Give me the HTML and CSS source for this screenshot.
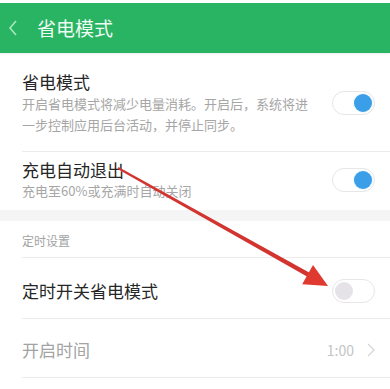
FILE: index.html
```html
<!DOCTYPE html>
<html lang="zh-CN">
<head>
<meta charset="utf-8">
<link rel="stylesheet" href="styles.css">
</head>
<body>
<div class="page">
  <header class="appbar">
    <svg class="back" width="10" height="16" viewBox="0 0 10 16"><path d="M8 1 L2 8 L8 15" fill="none" stroke="#a8e6bf" stroke-width="1.6"/></svg>
    <span class="appbar-title">省电模式</span>
  </header>

  <div class="row row-main">
    <div class="text">
      <div class="title">省电模式</div>
      <div class="desc desc-wide">开启省电模式将减少电量消耗。开启后，系统将进一步控制应用后台活动，并停止同步。</div>
    </div>
    <span class="toggle on"><span class="knob"></span></span>
  </div>

  <div class="row row-charge">
    <div class="text">
      <div class="title">充电自动退出</div>
      <div class="desc">充电至60%或充满时自动关闭</div>
    </div>
    <span class="toggle on"><span class="knob"></span></span>
  </div>

  <div class="band"></div>

  <div class="section-head">定时设置</div>

  <div class="row row-single">
    <div class="title">定时开关省电模式</div>
    <span class="toggle off"><span class="knob"></span></span>
  </div>

  <div class="row row-single row-disabled">
    <div class="title">开启时间</div>
    <span class="value">1:00
      <svg class="chev" width="8" height="14" viewBox="0 0 8 14"><path d="M1 1 L7 7 L1 13" fill="none" stroke="#d6d6d6" stroke-width="1.3"/></svg>
    </span>
  </div>

  <svg class="arrow" width="390" height="389" viewBox="0 0 390 389">
    <polygon points="117.5,168.9 118.5,167.1 309.6,272.7 307.4,276.7" fill="#d2352f"/>
    <polygon points="328,286 302.2,284.3 313.0,264.9" fill="#e03a30"/>
  </svg>
</div>
</body>
</html>
```

FILE: styles.css
```css
* { box-sizing: border-box; }
html, body { margin: 0; padding: 0; background: #fff; }
body {
  font-family: "Noto Sans CJK SC", "Noto Sans", sans-serif;
  width: 390px;
  height: 389px;
  overflow: hidden;
}
.page { position: relative; padding-top: 3px; }

.appbar {
  height: 50px;
  background: #29b464;
  display: flex;
  align-items: center;
  padding-left: 8px;
  box-shadow: 0 1px 2px rgba(0,0,0,0.08);
}
.back { margin-right: 19px; }
.appbar-title {
  color: #eefbf2;
  font-size: 19px;
  line-height: 24px;
}

.row {
  margin-left: 22px;
  padding-right: 15px;
  display: flex;
  align-items: center;
  justify-content: space-between;
  border-bottom: 1px solid #ececec;
}
.title {
  font-size: 17px;
  line-height: 22px;
  color: #262626;
}
.desc {
  font-size: 13px;
  line-height: 19px;
  color: #a6a6a6;
}
.desc-wide { width: 292px; line-height: 21px; }

.row-main { padding-top: 17px; padding-bottom: 16px; margin-top: 1px; }
.row-charge { padding-top: 7px; padding-bottom: 10px; border-bottom: none; }
.row-single { padding-top: 21px; padding-bottom: 15px; }
.row-disabled { padding-top: 20px; padding-bottom: 16px; }
.row-disabled .title { color: #a3a3a3; }

.band { height: 11px; background: #f5f5f5; }

.section-head {
  margin-left: 22px;
  padding-top: 12px;
  padding-bottom: 8px;
  font-size: 12px;
  line-height: 16px;
  color: #a3a3a3;
  border-bottom: 1px solid #ececec;
}

.toggle {
  width: 43px;
  height: 24px;
  border-radius: 12px;
  border: 1px solid #e6e6e6;
  background: #fff;
  display: flex;
  align-items: center;
  padding: 0 2px;
}
.toggle.on { justify-content: flex-end; }
.toggle.on .knob { background: #3a9ee8; box-shadow: 0 0 2px rgba(58,158,232,0.3); }
.toggle.off { justify-content: flex-start; }
.toggle.off .knob { background: #e6e3e8; }
.knob { width: 18px; height: 18px; border-radius: 50%; }

.value {
  display: flex;
  align-items: center;
  gap: 13px;
  font-size: 14px;
  color: #c4c4c4;
  margin-right: 0;
}

.arrow { position: absolute; left: 0; top: 0; pointer-events: none; }
```
